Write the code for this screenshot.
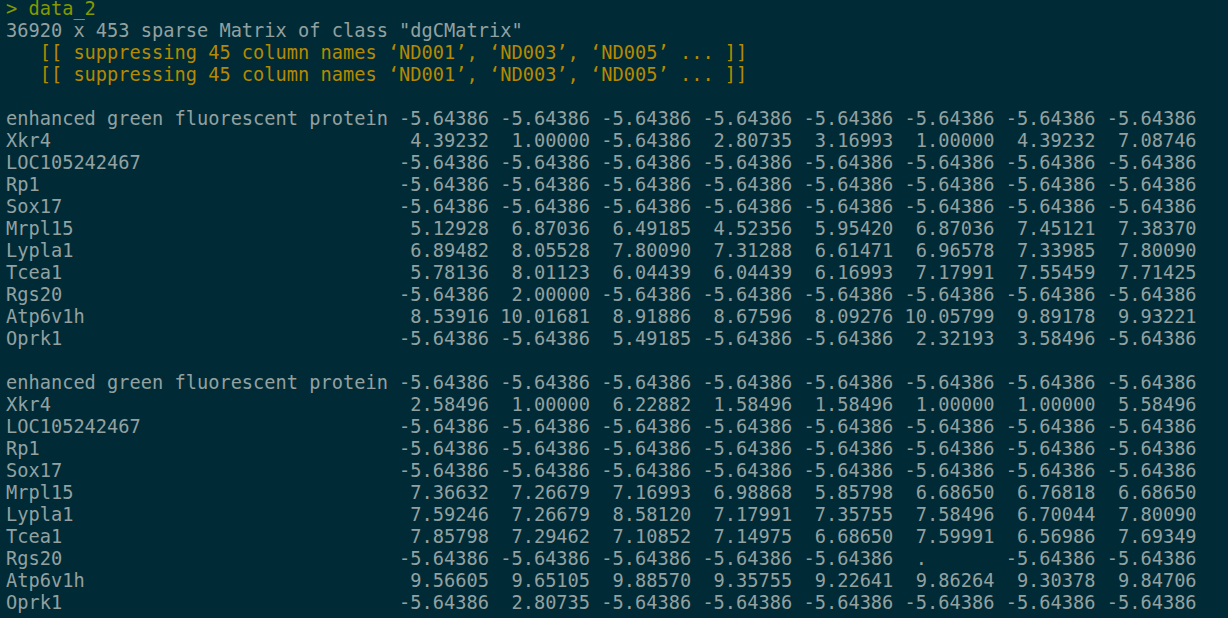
import React from "react";

const NEG = "-5.64386";
const allNeg = Array(8).fill(NEG);

const block1: [string, string[]][] = [
  ["enhanced green fluorescent protein", allNeg],
  ["Xkr4", ["4.39232", "1.00000", NEG, "2.80735", "3.16993", "1.00000", "4.39232", "7.08746"]],
  ["LOC105242467", allNeg],
  ["Rp1", allNeg],
  ["Sox17", allNeg],
  ["Mrpl15", ["5.12928", "6.87036", "6.49185", "4.52356", "5.95420", "6.87036", "7.45121", "7.38370"]],
  ["Lypla1", ["6.89482", "8.05528", "7.80090", "7.31288", "6.61471", "6.96578", "7.33985", "7.80090"]],
  ["Tcea1", ["5.78136", "8.01123", "6.04439", "6.04439", "6.16993", "7.17991", "7.55459", "7.71425"]],
  ["Rgs20", [NEG, "2.00000", NEG, NEG, NEG, NEG, NEG, NEG]],
  ["Atp6v1h", ["8.53916", "10.01681", "8.91886", "8.67596", "8.09276", "10.05799", "9.89178", "9.93221"]],
  ["Oprk1", [NEG, NEG, "5.49185", NEG, NEG, "2.32193", "3.58496", NEG]],
];

const block2: [string, string[]][] = [
  ["enhanced green fluorescent protein", allNeg],
  ["Xkr4", ["2.58496", "1.00000", "6.22882", "1.58496", "1.58496", "1.00000", "1.00000", "5.58496"]],
  ["LOC105242467", allNeg],
  ["Rp1", allNeg],
  ["Sox17", allNeg],
  ["Mrpl15", ["7.36632", "7.26679", "7.16993", "6.98868", "5.85798", "6.68650", "6.76818", "6.68650"]],
  ["Lypla1", ["7.59246", "7.26679", "8.58120", "7.17991", "7.35755", "7.58496", "6.70044", "7.80090"]],
  ["Tcea1", ["7.85798", "7.29462", "7.10852", "7.14975", "6.68650", "7.59991", "6.56986", "7.69349"]],
  ["Rgs20", [NEG, NEG, NEG, NEG, NEG, ".", NEG, NEG]],
  ["Atp6v1h", ["9.56605", "9.65105", "9.88570", "9.35755", "9.22641", "9.86264", "9.30378", "9.84706"]],
  ["Oprk1", [NEG, "2.80735", NEG, NEG, NEG, NEG, NEG, NEG]],
];

const fmt = (v: string) => (v === "." ? " .      " : v.padStart(8, " "));

const row = ([name, vals]: [string, string[]]) =>
  name.padEnd(34, " ") + " " + vals.map(fmt).join(" ");

const Line = ({ children, className = "" }: { children?: React.ReactNode; className?: string }) => (
  <div className={`h-[22px] whitespace-pre ${className}`}>{children}</div>
);

export default function App() {
  return (
    <div className="h-[618px] w-[1228px] overflow-hidden bg-[#002b36]">
      <div
        className="-mt-[2px] pl-[6px] text-[18.67px] leading-[22px] text-[#93a1a1]"
        style={{ fontFamily: '"DejaVu Sans Mono", "Liberation Mono", monospace' }}
      >
        <Line className="text-[#859900]">{"> data_2"}</Line>
        <Line>{'36920 x 453 sparse Matrix of class "dgCMatrix"'}</Line>
        <Line className="text-[#b58900]">{"   [[ suppressing 45 column names \u2018ND001\u2019, \u2018ND003\u2019, \u2018ND005\u2019 ... ]]"}</Line>
        <Line className="text-[#b58900]">{"   [[ suppressing 45 column names \u2018ND001\u2019, \u2018ND003\u2019, \u2018ND005\u2019 ... ]]"}</Line>
        <Line />
        {block1.map((r, i) => (
          <Line key={`a${i}`}>{row(r)}</Line>
        ))}
        <Line />
        {block2.map((r, i) => (
          <Line key={`b${i}`}>{row(r)}</Line>
        ))}
      </div>
    </div>
  );
}
